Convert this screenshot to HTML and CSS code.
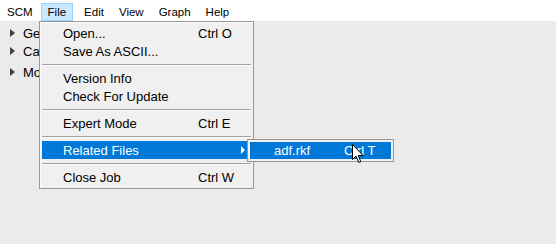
FILE: index.html
```html
<!DOCTYPE html>
<html>
<head>
<meta charset="utf-8">
<link rel="stylesheet" href="styles.css">
</head>
<body>
<div class="menubar">
  <span class="mb-item">SCM</span>
  <span class="mb-item active">File</span>
  <span class="mb-item">Edit</span>
  <span class="mb-item">View</span>
  <span class="mb-item">Graph</span>
  <span class="mb-item">Help</span>
</div>
<div class="main">
  <div class="tree-row"><span class="tri"></span>General</div>
  <div class="tree-row"><span class="tri"></span>Calculation</div>
  <div class="tree-row r3"><span class="tri"></span>Model</div>
</div>

<div class="menu">
  <div class="mi"><span class="lbl">Open...</span><span class="sc">Ctrl O</span></div>
  <div class="mi"><span class="lbl">Save As ASCII...</span></div>
  <div class="sep"></div>
  <div class="mi"><span class="lbl">Version Info</span></div>
  <div class="mi"><span class="lbl">Check For Update</span></div>
  <div class="sep"></div>
  <div class="mi"><span class="lbl">Expert Mode</span><span class="sc">Ctrl E</span></div>
  <div class="sep"></div>
  <div class="mi hl"><span class="lbl">Related Files</span><span class="arrow"></span></div>
  <div class="sep"></div>
  <div class="mi"><span class="lbl">Close Job</span><span class="sc">Ctrl W</span></div>
</div>

<div class="submenu">
  <div class="smi"><span class="slbl">adf.rkf</span><span class="ssc">Ctrl T</span></div>
</div>

<svg class="cursor" width="13" height="20" viewBox="0 0 13 20">
  <path d="M0.5 0.5 L0.5 15.5 L4 12 L6.8 18.5 L8.8 17.6 L6.2 11.5 L11 11.5 Z" fill="#fff" stroke="#000" stroke-width="1" stroke-linejoin="miter"/>
</svg>
</body>
</html>
```

FILE: styles.css
```css
html, body {
  margin: 0;
  padding: 0;
}
body {
  width: 556px;
  height: 244px;
  background: #ebebeb;
  font-family: "Liberation Sans", Arial, sans-serif;
  font-size: 13px;
  color: #000;
  overflow: hidden;
  position: relative;
}
.menubar {
  height: 21px;
  background: #fff;
  display: flex;
  align-items: stretch;
  gap: 1px;
  padding: 3px 0 0 0;
  box-sizing: border-box;
  font-size: 11.5px;
}
.mb-item {
  display: flex;
  align-items: center;
  padding: 0 6px;
  border: 1px solid transparent;
  height: 18px;
  box-sizing: border-box;
}
.mb-item.active {
  background: #cce8ff;
  border-color: #99d1ff;
  margin-right: 3px;
}
.main {
  padding: 3px 0 0 10px;
}
.tree-row {
  height: 18px;
  display: flex;
  align-items: center;
  gap: 8px;
}
.tree-row.r3 {
  margin-top: 3px;
}
.tri {
  width: 0;
  height: 0;
  border-top: 4px solid transparent;
  border-bottom: 4px solid transparent;
  border-left: 5px solid #404040;
}
.menu {
  position: absolute;
  left: 39px;
  top: 21px;
  width: 215px;
  box-sizing: border-box;
  background: #f0f0f0;
  border: 1px solid #979797;
  padding: 2px;
  box-shadow: inset 1px 1px 0 #fcfcfc;
}
.mi {
  height: 18px;
  display: flex;
  align-items: center;
  position: relative;
}
.lbl {
  padding-left: 21px;
  width: 135px;
  white-space: nowrap;
}
.sc {
  flex: 1;
  white-space: nowrap;
}
.mi.hl {
  background: #0078d7;
  color: #fff;
}
.arrow {
  position: absolute;
  right: 6px;
  top: 5px;
  width: 0;
  height: 0;
  border-top: 4px solid transparent;
  border-bottom: 4px solid transparent;
  border-left: 4px solid #fff;
}
.sep {
  height: 9px;
  display: flex;
  align-items: center;
}
.sep::before {
  content: "";
  display: block;
  width: 100%;
  height: 1px;
  background: #a0a0a0;
  box-shadow: 0 1px 0 #fcfcfc;
}
.submenu {
  position: absolute;
  left: 247px;
  top: 139px;
  width: 147px;
  box-sizing: border-box;
  background: #f0f0f0;
  border: 1px solid #979797;
  padding: 2px;
}
.smi {
  height: 17px;
  background: #0078d7;
  color: #fff;
  display: flex;
  align-items: center;
}
.slbl {
  padding-left: 24px;
  width: 70px;
}
.cursor {
  position: absolute;
  left: 352px;
  top: 144px;
}
```
